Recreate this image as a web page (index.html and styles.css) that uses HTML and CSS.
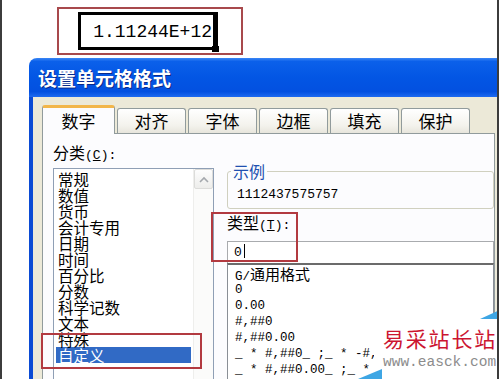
FILE: index.html
```html
<!DOCTYPE html>
<html>
<head>
    <title>设置单元格格式</title>
    <link rel="stylesheet" href="styles.css">
</head>
<body>
    <div class="shot">
        <div class="cellarea">
            <div class="mark">
                <div class="cell">1.11244E+12</div>
            </div>
        </div>

        <div class="dialog">
            <div class="titlebar">设置单元格格式</div>
            <div class="dlg-body">
                <div class="tabs">
                    <div class="tab active">数字</div>
                    <div class="tab">对齐</div>
                    <div class="tab">字体</div>
                    <div class="tab">边框</div>
                    <div class="tab">填充</div>
                    <div class="tab">保护</div>
                </div>
                <div class="panel">
                    <div class="left-col">
                        <div class="label">分类<span class="lat">(<u>C</u>):</span></div>
                        <div class="listbox">
                            <ul class="cat-list">
                                <li>常规</li>
                                <li>数值</li>
                                <li>货币</li>
                                <li>会计专用</li>
                                <li>日期</li>
                                <li>时间</li>
                                <li>百分比</li>
                                <li>分数</li>
                                <li>科学记数</li>
                                <li>文本</li>
                                <li>特殊</li>
                                <li class="sel">自定义</li>
                            </ul>
                            <div class="scrollbar">
                                <div class="sb-btn">
                                    <svg width="10" height="7" viewBox="0 0 10 7"><path d="M1 6 L5 2 L9 6" fill="none" stroke="#a4a8ad" stroke-width="1.6"/></svg>
                                </div>
                            </div>
                        </div>
                    </div>
                    <div class="right-col">
                        <fieldset class="sample">
                            <legend>示例</legend>
                            <div class="sample-val">1112437575757</div>
                        </fieldset>
                        <div class="label type-label">类型<span class="lat">(<u>T</u>):</span></div>
                        <div class="type-input">0<span class="caret"></span></div>
                        <ul class="fmt-list">
                            <li>G/<span class="cjk">通用格式</span></li>
                            <li>0</li>
                            <li>0.00</li>
                            <li>#,##0</li>
                            <li>#,##0.00</li>
                            <li>_ * #,##0_ ;_ * -#,##0_ ;_ * "-"_ ;_ @_ </li>
                            <li>_ * #,##0.00_ ;_ * -#,##0.00_ ;_ * "-"??_ ;_ @_ </li>
                            <li>_ ￥* #,##0_ ;_ ￥* -#,##0_ ;_ ￥* "-"_ ;_ @_ </li>
                        </ul>
                    </div>
                </div>
            </div>
        </div>

        <div class="callout call-type"></div>
        <div class="callout call-custom"></div>

        <div class="watermark">
            <svg class="wm-bg" width="146" height="71" viewBox="0 0 146 71">
                <rect x="18" y="10" width="128" height="61" fill="#ffffff"/>
                <polygon points="124,11 146,11 146,1" fill="#3ea6e4"/>
                <polygon points="2,71 26,71 26,61" fill="#3ea6e4"/>
            </svg>
            <div class="wm-title">易采站长站</div>
            <div class="wm-url">www.easck.com</div>
        </div>
    </div>
</body>
</html>
```

FILE: styles.css
```css
body {
    margin: 0;
    background: #fff;
    font-family: "Noto Sans CJK SC", sans-serif;
    color: #000;
}
.shot {
    position: relative;
    width: 499px;
    height: 379px;
    box-sizing: border-box;
    border-left: 2px solid #3c3c3c;
    border-right: 2px solid #3c3c3c;
    overflow: hidden;
    background: #fff;
}

/* the excel cell at the top */
.cellarea {
    height: 58px;
    box-sizing: border-box;
    padding: 7px 0 0 55px;
}
.mark {
    width: 186px;
    height: 48px;
    box-sizing: border-box;
    border: 2px solid #a8494c;
    padding: 3px 0 0 19px;
}
.cell {
    position: relative;
    width: 140px;
    height: 38px;
    box-sizing: border-box;
    border: 3px solid #000;
    border-right-width: 5px;
    padding: 1px 1px 0 0;
    font-family: "Liberation Mono", monospace;
    font-size: 18px;
    line-height: 32px;
    text-align: right;
}
.cell::after {
    content: "";
    position: absolute;
    right: -6px;
    bottom: -5px;
    width: 7px;
    height: 6px;
    background: #000;
}

/* dialog */
.dialog {
    margin-left: 27px;
    width: 520px;
}
.titlebar {
    height: 39px;
    border-radius: 8px 8px 0 0;
    background: linear-gradient(to bottom, #3a86f5 0%, #0b60ea 9%, #0356e4 50%, #0350e0 86%, #1e6af0 100%);
    color: #fff;
    font-size: 19px;
    font-weight: bold;
    line-height: 39px;
    padding-left: 9px;
    text-shadow: 1px 1px 0 #0a2a8a;
}
.dlg-body {
    border-left: 4px solid #0b4bd4;
    background: #ece9d8;
    padding: 8px 0 0 9px;
    height: 300px;
}
.tabs {
    display: flex;
    align-items: flex-end;
    height: 28px;
    position: relative;
    z-index: 1;
}
.tab {
    flex: none;
    width: 69px;
    height: 25px;
    box-sizing: border-box;
    margin-left: 2px;
    border: 1px solid #919b9c;
    border-bottom: 0;
    border-radius: 3px 3px 0 0;
    background: linear-gradient(#ffffff, #f3f2ec 70%, #e7e5dc);
    font-size: 17px;
    line-height: 24px;
    text-align: center;
}
.tab.active {
    width: 73px;
    height: 29px;
    margin-left: 0;
    margin-bottom: -1px;
    background: #fcfcfe;
    border-top: 3px solid #f2b64a;
    line-height: 25px;
}
.panel {
    width: 453px;
    height: 260px;
    box-sizing: border-box;
    border: 1px solid #919b9c;
    background: #fcfcfe;
    display: flex;
    padding-left: 10px;
}

.label {
    margin-top: 9px;
    font-size: 16px;
    line-height: 18px;
    white-space: nowrap;
}
.lat {
    font-family: "Liberation Mono", monospace;
    font-size: 13px;
}

/* category list */
.left-col {
    flex: none;
    width: 161px;
    display: flex;
    flex-direction: column;
}
.listbox {
    margin-top: 3px;
    flex: 1;
    display: flex;
    border: 1px solid #8f9fb5;
    background: #fff;
}
.cat-list {
    list-style: none;
    margin: 0;
    padding: 2px 0 0;
    flex: 1;
    font-size: 15.5px;
    line-height: 16px;
}
.cat-list li {
    margin: 0 2px;
    padding-left: 2px;
    height: 16px;
    white-space: nowrap;
}
.cat-list li.sel {
    background: #316ac5;
    color: #fff;
}
.scrollbar {
    flex: none;
    width: 20px;
    box-sizing: border-box;
    border-left: 1px solid #eeeeec;
    background: #fbfbfa;
}
.sb-btn {
    height: 20px;
    box-sizing: border-box;
    border: 1px solid #dcdcda;
    border-radius: 2px;
    background: linear-gradient(#fdfdfd, #ededeb);
    display: flex;
    align-items: center;
    justify-content: center;
}

/* right side */
.right-col {
    margin-left: 13px;
    flex: 1;
    min-width: 0;
    display: flex;
    flex-direction: column;
}
.sample {
    margin: 29px 0 0;
    padding: 8px 0 5px 9px;
    border: 1px solid #d0d0bf;
    border-radius: 3px;
    min-width: 0;
}
.sample legend {
    padding: 0 2px;
    margin-left: -6px;
    font-size: 16px;
    line-height: 16px;
    color: #2150b0;
}
.sample-val {
    font-family: "Liberation Mono", monospace;
    font-size: 13px;
    line-height: 16px;
}
.type-label {
    margin-top: 4px;
}
.type-input {
    margin-top: 6px;
    height: 22px;
    box-sizing: border-box;
    border: 1px solid #a9abae;
    border-bottom: 0;
    padding-left: 6px;
    background: #fff;
    font-family: "Liberation Mono", monospace;
    font-size: 13px;
    line-height: 21px;
}
.caret {
    display: inline-block;
    width: 1px;
    height: 14px;
    margin-left: 2px;
    background: #000;
    vertical-align: -2px;
}
.fmt-list {
    list-style: none;
    margin: 0;
    flex: 1;
    overflow: hidden;
    border: 1px solid #8a8f96;
    border-top: 2px solid #6b6b6b;
    padding: 1px 0 0 7px;
    background: #fff;
    font-family: "Liberation Mono", monospace;
    font-size: 12.5px;
    line-height: 16px;
}
.fmt-list li {
    height: 16px;
    white-space: pre;
}
.fmt-list .cjk {
    font-family: "Noto Sans CJK SC", sans-serif;
    font-size: 15px;
    line-height: 16px;
}

/* red annotation boxes */
.callout {
    position: absolute;
    box-sizing: border-box;
    border: 2px solid #b23a40;
}
.call-type {
    left: 209px;
    top: 212px;
    width: 87px;
    height: 50px;
}
.call-custom {
    left: 39px;
    top: 333px;
    width: 161px;
    height: 36px;
}

/* site watermark */
.watermark {
    position: absolute;
    left: 354px;
    top: 308px;
    width: 146px;
    height: 71px;
    box-sizing: border-box;
    padding: 17px 0 0 27px;
}
.wm-bg {
    position: absolute;
    left: 0;
    top: 0;
}
.wm-title {
    position: relative;
    font-size: 21px;
    line-height: 26px;
    letter-spacing: 1.8px;
    color: #cc1530;
    white-space: nowrap;
}
.wm-url {
    position: relative;
    margin-top: 3px;
    font-family: "Liberation Mono", monospace;
    font-size: 14.5px;
    line-height: 16px;
    color: #8c8c8c;
    white-space: nowrap;
}
```
